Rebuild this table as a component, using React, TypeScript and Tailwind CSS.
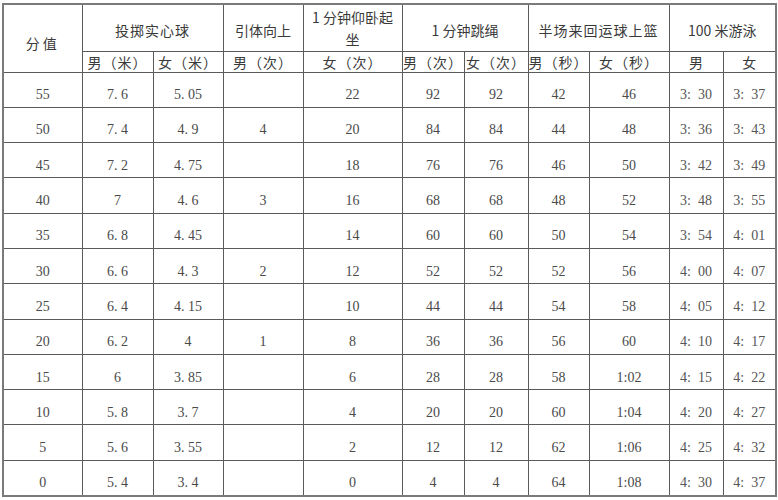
import React from "react";

const rows: string[][] = [
  ["55", "7. 6", "5. 05", "", "22", "92", "92", "42", "46", "3:  30", "3:  37"],
  ["50", "7. 4", "4. 9", "4", "20", "84", "84", "44", "48", "3:  36", "3:  43"],
  ["45", "7. 2", "4. 75", "", "18", "76", "76", "46", "50", "3:  42", "3:  49"],
  ["40", "7", "4. 6", "3", "16", "68", "68", "48", "52", "3:  48", "3:  55"],
  ["35", "6. 8", "4. 45", "", "14", "60", "60", "50", "54", "3:  54", "4:  01"],
  ["30", "6. 6", "4. 3", "2", "12", "52", "52", "52", "56", "4:  00", "4:  07"],
  ["25", "6. 4", "4. 15", "", "10", "44", "44", "54", "58", "4:  05", "4:  12"],
  ["20", "6. 2", "4", "1", "8", "36", "36", "56", "60", "4:  10", "4:  17"],
  ["15", "6", "3. 85", "", "6", "28", "28", "58", "1:02", "4:  15", "4:  22"],
  ["10", "5. 8", "3. 7", "", "4", "20", "20", "60", "1:04", "4:  20", "4:  27"],
  ["5", "5. 6", "3. 55", "", "2", "12", "12", "62", "1:06", "4:  25", "4:  32"],
  ["0", "5. 4", "3. 4", "", "0", "4", "4", "64", "1:08", "4:  30", "4:  37"],
];

const widths = [79, 71, 70, 80, 99, 62, 64, 61, 80, 54, 53];

const hd =
  "border border-[#5a5a5a] text-center align-middle text-[14px] leading-[18px] text-[#3a3a3a] p-0 font-['Noto_Sans_CJK_SC','Noto_Sans',sans-serif] font-normal";
const td =
  "border border-[#5a5a5a] text-center align-middle p-0 pt-[11px] text-[14px] leading-[18px] text-[#4a4a4a] font-['Liberation_Serif','Noto_Sans_CJK_SC',serif]";

export default function App() {
  return (
    <div className="w-[778px] h-[500px] bg-white pl-[2px] pt-[3px]">
      <table className="table-fixed border-collapse w-[773px] border-2 border-[#7a7a7a]">
        <colgroup>
          {widths.map((w, i) => (
            <col key={i} style={{ width: w }} />
          ))}
        </colgroup>
        <thead>
          <tr className="h-[47px]">
            <th rowSpan={2} className={hd + " pt-[10px] tracking-[3px]"}>
              分值
            </th>
            <th colSpan={2} className={hd + " pt-[4px] tracking-[1px]"}>
              投掷实心球
            </th>
            <th className={hd + " pt-[4px]"}>引体向上</th>
            <th className={hd + " leading-[22px] pt-[1px]"}>
              1 分钟仰卧起
              <br />坐
            </th>
            <th colSpan={2} className={hd + " pt-[4px]"}>
              1 分钟跳绳
            </th>
            <th colSpan={2} className={hd + " pt-[4px] tracking-[1px]"}>
              半场来回运球上篮
            </th>
            <th colSpan={2} className={hd + " pt-[4px]"}>
              100 米游泳
            </th>
          </tr>
          <tr className="h-[21px]">
            <th className={hd + " tracking-[1px]"}>男（米）</th>
            <th className={hd + " tracking-[1px]"}>女（米）</th>
            <th className={hd + " tracking-[1px]"}>男（次）</th>
            <th className={hd + " tracking-[1px]"}>女（次）</th>
            <th className={hd + " tracking-[1px]"}>男（次）</th>
            <th className={hd + " tracking-[1px]"}>女（次）</th>
            <th className={hd + " tracking-[1px]"}>男（秒）</th>
            <th className={hd + " tracking-[1px]"}>女（秒）</th>
            <th className={hd}>男</th>
            <th className={hd}>女</th>
          </tr>
        </thead>
        <tbody>
          {rows.map((r, i) => (
            <tr key={i} className="h-[35.3px]">
              {r.map((c, j) => (
                <td
                  key={j}
                  className={td + (j >= 9 ? " text-[13px] whitespace-pre text-[#555]" : "")}
                >
                  {c}
                </td>
              ))}
            </tr>
          ))}
        </tbody>
      </table>
    </div>
  );
}
